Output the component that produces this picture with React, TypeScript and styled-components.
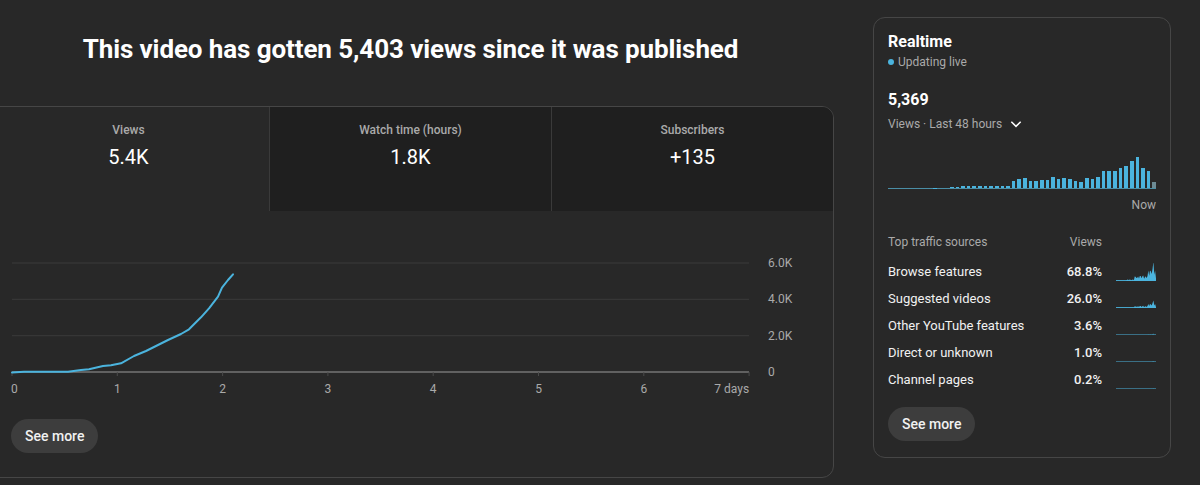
import React from 'react';
import styled, { createGlobalStyle } from 'styled-components';

const GlobalStyle = createGlobalStyle`
  html, body {
    margin: 0;
    padding: 0;
    background: #282828;
    overflow: hidden;
  }
  body {
    font-family: Roboto, 'Liberation Sans', Arial, sans-serif;
    color: #f1f1f1;
  }
`;

const ACCENT = '#4bb4de';

// layout
const Page = styled.div`
  display: flex;
  align-items: flex-start;
  width: 1200px;
  height: 485px;
`;

const MainColumn = styled.div`
  width: 847px;
  margin-left: -13px;
  flex-shrink: 0;
`;

const Headline = styled.h1`
  margin: 33px 0 41px;
  height: 32px;
  font-size: 26px;
  line-height: 32px;
  font-weight: 700;
  letter-spacing: -0.1px;
  text-align: center;
  color: #ffffff;
`;

// main card
const MainCard = styled.div`
  box-sizing: border-box;
  height: 372px;
  border: 1px solid #464646;
  border-radius: 12px;
  overflow: hidden;
`;

const Tabs = styled.div`
  display: flex;
  height: 104px;
`;

const Tab = styled.div<{ $active?: boolean }>`
  flex: 1;
  display: flex;
  flex-direction: column;
  align-items: center;
  padding-top: 15px;
  box-sizing: border-box;
  background: ${p => (p.$active ? 'transparent' : '#1f1f1f')};
  & + & {
    border-left: 1px solid #3a3a3a;
  }
`;

const TabLabel = styled.div`
  font-size: 12px;
  line-height: 16px;
  font-weight: 500;
  color: #aaaaaa;
`;

const TabValue = styled.div`
  margin-top: 5px;
  font-size: 20px;
  line-height: 28px;
  color: #ffffff;
`;

const ChartArea = styled.div`
  padding: 39px 0 0 13px;
`;

const ChartSvg = styled.svg`
  display: block;
  font-family: Roboto, 'Liberation Sans', Arial, sans-serif;
  font-size: 12px;
`;

const PillButton = styled.button`
  height: 34px;
  padding: 0 14px;
  border: none;
  border-radius: 17px;
  background: #3d3d3d;
  color: #f1f1f1;
  font-family: Roboto, 'Liberation Sans', Arial, sans-serif;
  font-size: 14px;
  font-weight: 500;
  cursor: pointer;
`;

const MainButtonRow = styled.div`
  margin-top: 19px;
  padding-left: 23px;
`;

// realtime card
const SideCard = styled.aside`
  box-sizing: border-box;
  width: 298px;
  margin: 17px 0 0 39px;
  padding: 12px 14px 16px;
  border: 1px solid #464646;
  border-radius: 12px;
  display: flex;
  flex-direction: column;
  align-items: flex-start;
`;

const SideTitle = styled.div`
  font-size: 16px;
  line-height: 24px;
  font-weight: 700;
  color: #ffffff;
`;

const LiveRow = styled.div`
  display: flex;
  align-items: center;
  gap: 4px;
  font-size: 12px;
  line-height: 16px;
  color: #aaaaaa;
`;

const LiveDot = styled.span`
  width: 6px;
  height: 6px;
  border-radius: 50%;
  background: ${ACCENT};
`;

const BigCount = styled.div`
  margin-top: 18px;
  font-size: 16px;
  line-height: 24px;
  font-weight: 700;
  color: #ffffff;
`;

const PeriodRow = styled.div`
  margin-top: 2px;
  display: flex;
  align-items: center;
  gap: 7px;
  font-size: 12px;
  line-height: 20px;
  color: #aaaaaa;
`;

const BarChart = styled.div`
  align-self: stretch;
  margin-top: 20px;
  height: 34px;
  display: flex;
  align-items: flex-end;
  gap: 2px;
  border-bottom: 1px solid #4a8ea6;
`;

const Bar = styled.div<{ $muted?: boolean }>`
  flex: 1;
  background: ${p => (p.$muted ? '#6d8b95' : ACCENT)};
`;

const NowLabel = styled.div`
  align-self: stretch;
  margin-top: 8px;
  text-align: right;
  font-size: 12px;
  line-height: 16px;
  color: #aaaaaa;
`;

const SourceTable = styled.div`
  align-self: stretch;
  margin-top: 21px;
`;

const SourceRow = styled.div<{ $head?: boolean }>`
  display: grid;
  grid-template-columns: 1fr 60px 54px;
  align-items: center;
  height: ${p => (p.$head ? '16px' : '27px')};
  margin-bottom: ${p => (p.$head ? '8px' : '0')};
  font-size: ${p => (p.$head ? '12px' : '13px')};
  font-weight: 400;
  color: ${p => (p.$head ? '#aaaaaa' : '#f1f1f1')};
`;

const Pct = styled.span<{ $head?: boolean }>`
  text-align: right;
  font-weight: ${p => (p.$head ? 400 : 500)};
`;

const Spark = styled.svg`
  justify-self: end;
  display: block;
`;

const SideButtonRow = styled.div`
  margin-top: 14px;
`;

// data
const days = ['0', '1', '2', '3', '4', '5', '6', '7 days'];
const yTicks = [
  { label: '6.0K', y: 13 },
  { label: '4.0K', y: 49.3 },
  { label: '2.0K', y: 85.7 },
];

const linePts: [number, number][] = [
  [11, 372.5], [23, 371.7], [67, 371.7], [80, 370], [88, 369.3], [102, 366], [110, 365.3],
  [120, 363.3], [133, 356], [145, 351], [157, 345], [167, 340], [180, 334], [188, 329.3],
  [200, 317.3], [208, 308.3], [217, 296.7], [221, 287.7], [227, 280], [232, 274.3],
];

const realtime = [
  0, 0, 0, 0, 0, 0, 0, 0, 0.5, 0, 0, 0.7, 1.5, 2.5, 2.5, 2.5, 2.5, 2.5, 2.5, 2.5, 2.5, 2.5,
  7, 9, 10, 7, 7, 8, 8, 11, 9, 10, 9, 7, 6, 10, 9, 11, 17, 17, 17, 20, 22, 27, 31, 20, 17, 6,
];

type Source = { name: string; pct: string; scale: number; faint?: boolean };
const sources: Source[] = [
  { name: 'Browse features', pct: '68.8%', scale: 0.52 },
  { name: 'Suggested videos', pct: '26.0%', scale: 0.2 },
  { name: 'Other YouTube features', pct: '3.6%', scale: 0.04, faint: true },
  { name: 'Direct or unknown', pct: '1.0%', scale: 0.03, faint: true },
  { name: 'Channel pages', pct: '0.2%', scale: 0.02, faint: true },
];

function Sparkline({ scale, faint }: { scale: number; faint?: boolean }) {
  const w = 40;
  const h = 18;
  const step = w / (realtime.length - 1);
  const pts = realtime.map((v, i) => {
    const jitter = i % 3 === 0 ? 0.6 : i % 2 === 0 ? 1.2 : 0.9;
    const val = Math.max(scale * v * jitter, 0.6);
    return `${(i * step).toFixed(1)},${(h - val).toFixed(1)}`;
  });
  const d = `M0,${h} L${pts.join(' L')} L${w},${h} Z`;
  return (
    <Spark width={w} height={h} viewBox={`0 0 ${w} ${h}`}>
      <path d={d} fill={ACCENT} opacity={faint ? 0.5 : 1} />
      <line x1="0" y1={h - 0.5} x2={w} y2={h - 0.5} stroke={ACCENT} strokeWidth="1" opacity={faint ? 0.35 : 0.8} />
    </Spark>
  );
}

function ViewsChart() {
  const x0 = 11;
  const dayW = 105.3;
  const base = 122;
  const path = linePts.map(([x, y], i) => `${i ? 'L' : 'M'}${x},${y - 250}`).join(' ');
  return (
    <ChartSvg width="800" height="150" viewBox="0 0 800 150">
      {yTicks.map(t => (
        <g key={t.label}>
          <line x1={x0} x2={748} y1={t.y} y2={t.y} stroke="#3a3a3a" strokeWidth="1" />
          <text x={767} y={t.y + 4} fill="#aaaaaa">{t.label}</text>
        </g>
      ))}
      <line x1={x0} x2={748} y1={base} y2={base} stroke="#9a9a9a" strokeWidth="1" />
      <text x={767} y={base + 4} fill="#aaaaaa">0</text>
      {days.map((d, i) => {
        const x = x0 + i * dayW;
        const anchor = i === 0 ? 'start' : i === days.length - 1 ? 'end' : 'middle';
        return (
          <g key={d}>
            <line x1={x} x2={x} y1={base} y2={base + 4} stroke="#4a4a4a" strokeWidth="1" />
            <text x={i === 0 ? x - 1 : x} y={base + 21} fill="#aaaaaa" textAnchor={anchor}>{d}</text>
          </g>
        );
      })}
      <path d={path} fill="none" stroke={ACCENT} strokeWidth="2" strokeLinejoin="round" strokeLinecap="round" />
    </ChartSvg>
  );
}

export default function App() {
  return (
    <>
      <GlobalStyle />
      <Page>
        <MainColumn>
          <Headline>This video has gotten 5,403 views since it was published</Headline>
          <MainCard>
            <Tabs>
              <Tab $active>
                <TabLabel>Views</TabLabel>
                <TabValue>5.4K</TabValue>
              </Tab>
              <Tab>
                <TabLabel>Watch time (hours)</TabLabel>
                <TabValue>1.8K</TabValue>
              </Tab>
              <Tab>
                <TabLabel>Subscribers</TabLabel>
                <TabValue>+135</TabValue>
              </Tab>
            </Tabs>
            <ChartArea>
              <ViewsChart />
            </ChartArea>
            <MainButtonRow>
              <PillButton>See more</PillButton>
            </MainButtonRow>
          </MainCard>
        </MainColumn>

        <SideCard>
          <SideTitle>Realtime</SideTitle>
          <LiveRow>
            <LiveDot />
            Updating live
          </LiveRow>
          <BigCount>5,369</BigCount>
          <PeriodRow>
            Views · Last 48 hours
            <svg width="14" height="14" viewBox="0 0 24 24">
              <path d="M4 8 L12 16 L20 8" fill="none" stroke="#ffffff" strokeWidth="2.6" />
            </svg>
          </PeriodRow>
          <BarChart>
            {realtime.map((v, i) => (
              <Bar key={i} $muted={i === realtime.length - 1} style={{ height: `${v}px` }} />
            ))}
          </BarChart>
          <NowLabel>Now</NowLabel>
          <SourceTable>
            <SourceRow $head>
              <span>Top traffic sources</span>
              <Pct $head>Views</Pct>
              <span />
            </SourceRow>
            {sources.map(s => (
              <SourceRow key={s.name}>
                <span>{s.name}</span>
                <Pct>{s.pct}</Pct>
                <Sparkline scale={s.scale} faint={s.faint} />
              </SourceRow>
            ))}
          </SourceTable>
          <SideButtonRow>
            <PillButton>See more</PillButton>
          </SideButtonRow>
        </SideCard>
      </Page>
    </>
  );
}
